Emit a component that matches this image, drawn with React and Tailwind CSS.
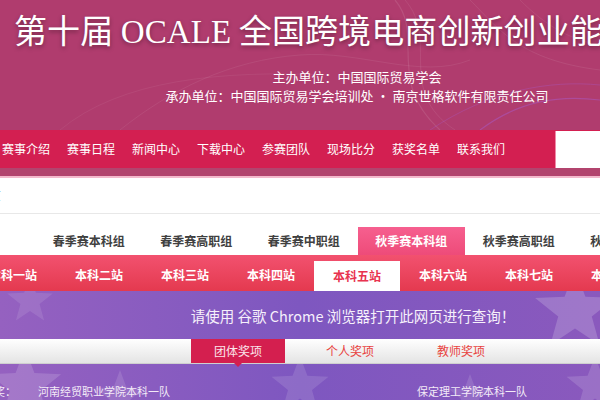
import React from "react";

const navItems = ["赛事介绍", "赛事日程", "新闻中心", "下载中心", "参赛团队", "现场比分", "获奖名单", "联系我们"];
const seasons = ["春季赛本科组", "春季赛高职组", "春季赛中职组", "秋季赛本科组", "秋季赛高职组", "秋季赛中职组"];
const stations = ["本科一站", "本科二站", "本科三站", "本科四站", "本科五站", "本科六站", "本科七站", "本科八站"];

function starPoints(cx, cy, r) {
  const pts = [];
  for (let i = 0; i < 10; i++) {
    const rad = i % 2 === 0 ? r : r * 0.42;
    const a = (Math.PI / 5) * i - Math.PI / 2;
    pts.push(`${(cx + rad * Math.cos(a)).toFixed(1)},${(cy + rad * Math.sin(a)).toFixed(1)}`);
  }
  return pts.join(" ");
}

function HeaderWaves() {
  return (
    <svg className="absolute inset-0" width="600" height="130" viewBox="0 0 600 130" fill="none">
      <path d="M395 0 C 425 35, 385 80, 440 130" stroke="rgba(255,255,255,0.10)" strokeWidth="1.2" />
      <path d="M405 0 C 440 40, 395 90, 455 130" stroke="rgba(255,255,255,0.08)" strokeWidth="1" />
      <path d="M120 130 C 170 90, 230 60, 300 55 C 360 50, 420 80, 470 60" stroke="rgba(255,255,255,0.07)" strokeWidth="1" />
      <path d="M60 130 C 120 80, 220 70, 330 75" stroke="rgba(255,255,255,0.06)" strokeWidth="1" />
      <path d="M470 0 C 500 30, 520 60, 600 70" stroke="rgba(255,255,255,0.08)" strokeWidth="1" />
      <path d="M480 130 C 520 100, 560 95, 600 100" stroke="rgba(170,90,200,0.5)" strokeWidth="1.2" />
      <path d="M430 130 C 490 90, 550 80, 600 85" stroke="rgba(170,90,200,0.35)" strokeWidth="1" />
      <path d="M520 0 C 545 25, 570 40, 600 45" stroke="rgba(255,255,255,0.07)" strokeWidth="1" />
    </svg>
  );
}

function Stars() {
  const stars = [
    [575, 310, 42, 0.18],
    [595, 385, 30, 0.14],
    [25, 385, 38, 0.15],
    [120, 395, 26, 0.12],
    [300, 385, 30, 0.12],
    [470, 395, 22, 0.12],
    [30, 300, 24, 0.1],
  ];
  return (
    <svg className="absolute inset-0" width="600" height="110" viewBox="0 290 600 110">
      {stars.map(([cx, cy, r, o], i) => (
        <polygon key={i} points={starPoints(cx, cy, r)} fill="white" opacity={o} />
      ))}
    </svg>
  );
}

export default function App() {
  return (
    <div className="w-[600px] h-[400px] overflow-hidden bg-white font-['Noto_Sans_CJK_SC','Liberation_Sans',sans-serif]">
      {/* header */}
      <div className="relative h-[130px] overflow-hidden bg-[#b03c6e]">
        <HeaderWaves />
        <div className="relative whitespace-nowrap pl-[14px] pt-[8px] text-[33px] leading-[42px] tracking-[0.1px] text-white [text-shadow:0_2px_4px_rgba(0,0,0,0.35)]">
          第十届 <span className="font-['Liberation_Serif',serif]">OCALE</span> 全国跨境电商创新创业能力大赛
        </div>
        <div className="relative mt-[14px] pl-[114px] text-center text-[13px] leading-[19px] text-white whitespace-nowrap">
          <div>主办单位：中国国际贸易学会</div>
          <div>承办单位：中国国际贸易学会培训处 · 南京世格软件有限责任公司</div>
        </div>
      </div>

      {/* nav */}
      <div className="flex h-[38px] items-stretch bg-[#d31f51]">
        <div className="flex items-center gap-[17px] pl-[2px] text-[12px] text-white whitespace-nowrap">
          {navItems.map((n) => (
            <span key={n}>{n}</span>
          ))}
        </div>
        <div className="ml-auto mt-[1px] w-[45px] bg-white border-l border-[#f08aa8]" />
      </div>
      <div className="h-[8px] bg-[#b2446e]" />
      <div className="h-[2px] bg-[#f3b9cc]" />

      {/* breadcrumb */}
      <div className="h-[36px] border-b border-[#e8e8e8] pt-[3px] whitespace-nowrap">
        <span className="-ml-[21px] text-[11px] text-[#6f9fd6]">首页</span>
      </div>
      <div className="h-[13px]" />

      {/* season tabs */}
      <div className="flex h-[28px] pl-[35px] whitespace-nowrap">
        {seasons.map((s, i) =>
          i === 3 ? (
            <div key={s} className="flex w-[107.5px] shrink-0 items-center justify-center bg-gradient-to-b from-[#f65f8f] to-[#ee4b79] text-[12px] font-bold text-white">
              {s}
            </div>
          ) : (
            <div key={s} className="flex w-[107.5px] shrink-0 items-center justify-center text-[12px] font-bold text-[#404040]">
              {s}
            </div>
          )
        )}
      </div>

      {/* stations */}
      <div className="flex h-[36px] items-end bg-gradient-to-b from-[#f2516f] to-[#e4394f] whitespace-nowrap">
        <div className="-ml-[30px] flex items-end">
          {stations.map((s, i) =>
            i === 4 ? (
              <div key={s} className="flex h-[30px] w-[86px] shrink-0 items-center justify-center bg-white text-[12px] font-bold text-[#e8334f]">
                {s}
              </div>
            ) : (
              <div key={s} className="flex h-[36px] w-[86px] shrink-0 items-center justify-center pt-[4px] text-[12px] font-bold text-white">
                {s}
              </div>
            )
          )}
        </div>
      </div>

      {/* purple query area */}
      <div className="relative h-[110px] overflow-hidden bg-gradient-to-r from-[#9561c0] via-[#7e57c0] to-[#8a59bd]">
        <Stars />
        <div className="relative pl-[106px] pt-[14px] text-center text-[14.5px] leading-[22px] text-[#f6f0fb] whitespace-nowrap">
          请使用 谷歌 Chrome 浏览器打开此网页进行查询！
        </div>
        <div className="relative mt-[12px] flex h-[25px] border-b border-[#cfcfcf] bg-gradient-to-b from-white to-[#e4e4e4] text-[12px] whitespace-nowrap">
          <div className="relative ml-[191px] flex w-[94px] items-center justify-center bg-[#d41f4f] text-[#fbe3ea]">
            团体奖项
            <div className="absolute left-1/2 top-full -ml-[4px] h-0 w-0 border-x-[4px] border-t-[4px] border-x-transparent border-t-[#d41f4f]" />
          </div>
          <div className="flex w-[130px] items-center justify-center text-[#e8433f]">个人奖项</div>
          <div className="flex w-[92px] items-center justify-center text-[#e8433f]">教师奖项</div>
        </div>
        <div className="relative mt-[19px] flex text-[11px] leading-[16px] text-[#f3eaf7] whitespace-nowrap">
          <span className="-ml-[28px] w-[66px] shrink-0">一等奖：</span>
          <span className="w-[379px] shrink-0">河南经贸职业学院本科一队</span>
          <span>保定理工学院本科一队</span>
        </div>
      </div>
    </div>
  );
}
